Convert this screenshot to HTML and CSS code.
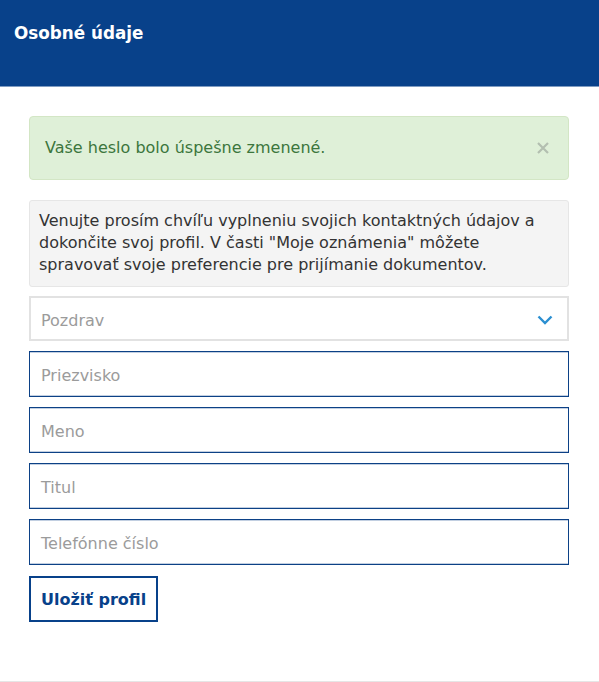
FILE: index.html
```html
<!DOCTYPE html>
<html lang="sk">
<head>
<meta charset="utf-8">
<title>Osobné údaje</title>
<link rel="stylesheet" href="styles.css">
</head>
<body>
<header class="page-header">
  <h1 class="page-title">Osobné údaje</h1>
</header>
<main class="content">
  <div class="alert">
    <span class="alert-text">Vaše heslo bolo úspešne zmenené.</span>
    <button class="alert-close" type="button" aria-label="Zavrieť">
      <svg width="12" height="12" viewBox="0 0 12 12"><path d="M1 1L11 11M11 1L1 11" stroke="#b3bfb0" stroke-width="2.2" fill="none"/></svg>
    </button>
  </div>
  <div class="info">Venujte prosím chvíľu vyplneniu svojich kontaktných údajov a dokončite svoj profil. V časti "Moje oznámenia" môžete spravovať svoje preferencie pre prijímanie dokumentov.</div>
  <form class="form">
    <div class="select">
      <span class="placeholder">Pozdrav</span>
      <svg class="chevron" width="16" height="10" viewBox="0 0 16 10"><path d="M1.5 1.5L8 8L14.5 1.5" stroke="#2b8fd1" stroke-width="2.4" fill="none"/></svg>
    </div>
    <div class="field"><span class="placeholder">Priezvisko</span></div>
    <div class="field"><span class="placeholder">Meno</span></div>
    <div class="field"><span class="placeholder">Titul</span></div>
    <div class="field"><span class="placeholder">Telefónne číslo</span></div>
    <div class="actions"><button class="btn" type="button">Uložiť profil</button></div>
  </form>
</main>
</body>
</html>
```
FILE: styles.css
```css
* { box-sizing: border-box; }
html, body { margin: 0; padding: 0; }
body {
  width: 599px;
  height: 682px;
  font-family: "DejaVu Sans", Verdana, sans-serif;
  background: #fff;
  color: #333;
  border-bottom: 1px solid #e6e6e6;
  overflow: hidden;
}
.page-header {
  height: 87px;
  background: #08418a;
  border-bottom: 1px solid #7f9cc2;
  padding: 23px 14px 0;
}
.page-title {
  margin: 0;
  color: #fff;
  font-size: 16.8px;
  font-weight: bold;
  line-height: 20px;
}
.content {
  padding: 29px 30px 0 29px;
  display: flex;
  flex-direction: column;
}
.alert {
  height: 64px;
  background: #dff0d8;
  border: 1px solid #d3e6c5;
  border-radius: 4px;
  display: flex;
  align-items: center;
  justify-content: space-between;
  padding: 0 19px 2px 15px;
  color: #3c763d;
  font-size: 16px;
}
.alert-close {
  border: 0;
  background: none;
  padding: 0;
  display: flex;
  margin-top: 2px;
}
.info {
  margin-top: 20px;
  background: #f4f4f4;
  border: 1px solid #e6e6e6;
  border-radius: 3px;
  padding: 9px 9px 10px;
  font-size: 16px;
  line-height: 22px;
  color: #333;
}
.form {
  margin-top: 9px;
  display: flex;
  flex-direction: column;
  gap: 10px;
}
.select {
  height: 45px;
  border: 2px solid #e2e2e2;
  display: flex;
  align-items: center;
  justify-content: space-between;
  padding: 3px 14px 0 10px;
}
.field {
  height: 46px;
  border: 1px solid #0c4186;
  box-shadow: inset 0 1px 0 rgba(12,65,134,0.25), inset 0 -1px 0 rgba(12,65,134,0.25);
  display: flex;
  align-items: center;
  padding: 3px 11px 0;
}
.placeholder {
  color: #9b9b9b;
  font-size: 16px;
}
.actions { display: flex; margin-top: 1px; }
.btn {
  height: 46px;
  padding: 0 10px;
  border: 2px solid #08418a;
  background: #fff;
  color: #08418a;
  font-family: "DejaVu Sans", Verdana, sans-serif;
  font-size: 16px;
  font-weight: bold;
}
```
